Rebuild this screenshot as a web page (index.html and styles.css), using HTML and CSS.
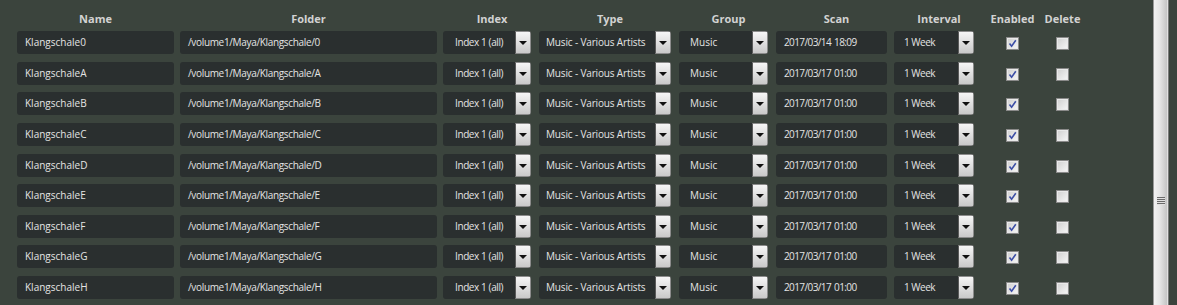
FILE: index.html
```html
<!DOCTYPE html>
<html lang="en">
<head>
    <meta charset="UTF-8">
    <title>Share Folders</title>
    <link rel="stylesheet" href="styles.css">
</head>
<body>
    <div class="page">
        <main class="shares">
            <div class="head">
                <div class="h c-name">Name</div>
                <div class="h c-folder">Folder</div>
                <div class="h c-index shift">Index</div>
                <div class="h c-type shift">Type</div>
                <div class="h c-group shift">Group</div>
                <div class="h c-scan shift">Scan</div>
                <div class="h c-interval shift">Interval</div>
                <div class="h c-enabled">Enabled</div>
                <div class="h c-delete">Delete</div>
            </div>
            <div id="rows" class="rows"></div>
        </main>
        <aside class="scrollbar"><span class="grip"></span></aside>
    </div>

    <template id="rowTpl">
        <div class="row">
            <div class="field c-name" data-k="name"></div>
            <div class="field c-folder" data-k="folder"></div>
            <div class="select c-index"><span class="val pad-index">Index 1 (all)</span><span class="drop"></span></div>
            <div class="select c-type"><span class="val pad-type">Music - Various Artists</span><span class="drop"></span></div>
            <div class="select c-group"><span class="val pad-group">Music</span><span class="drop"></span></div>
            <div class="field c-scan" data-k="scan"></div>
            <div class="select c-interval"><span class="val pad-interval">1 Week</span><span class="drop"></span></div>
            <div class="check-cell c-enabled"><span class="check on"><svg viewBox="0 0 9 9" width="9" height="9"><path d="M1.5 4.5 L3.6 7.2 L7.8 1.2" fill="none" stroke="#3c4ea6" stroke-width="1.6"/></svg></span></div>
            <div class="check-cell c-delete"><span class="check"></span></div>
        </div>
    </template>

    <script>
        const names = ['0', 'A', 'B', 'C', 'D', 'E', 'F', 'G', 'H'];
        const rows = document.getElementById('rows');
        const tpl = document.getElementById('rowTpl');

        names.forEach((n, i) => {
            const row = tpl.content.firstElementChild.cloneNode(true);
            row.querySelector('[data-k="name"]').textContent = 'Klangschale' + n;
            row.querySelector('[data-k="folder"]').textContent = '/volume1/Maya/Klangschale/' + n;
            row.querySelector('[data-k="scan"]').textContent = i === 0 ? '2017/03/14 18:09' : '2017/03/17 01:00';
            rows.appendChild(row);
        });
    </script>
</body>
</html>
```

FILE: styles.css
```css
* {
    margin: 0;
    padding: 0;
    box-sizing: border-box;
}

html, body {
    height: 100%;
    overflow: hidden;
}

body {
    background-color: #3b443d;
    color: #e4e4e4;
    font-family: 'Open Sans', 'DejaVu Sans', sans-serif;
    font-size: 10px;
}

.page {
    display: flex;
    height: 100%;
}

.shares {
    flex: 1;
    padding-left: 17px;
}

/* header */

.head {
    display: flex;
    height: 31px;
    padding-top: 7px;
}

.h {
    font-size: 11px;
    font-weight: 700;
    color: #d2d2d2;
    text-align: center;
    line-height: 24px;
    height: 24px;
}

.h.shift {
    padding-left: 10px;
}

/* columns */

.c-name { width: 157px; }
.c-folder { width: 257px; margin-left: 6px; letter-spacing: -0.33px; }
.c-index { width: 88px; margin-left: 6px; letter-spacing: -0.4px; }
.c-type { width: 132px; margin-left: 8px; letter-spacing: -0.15px; }
.c-group { width: 89px; margin-left: 8px; }
.c-scan { width: 111px; margin-left: 8px; letter-spacing: -0.6px; word-spacing: 1px; }
.c-interval { width: 80px; margin-left: 7px; letter-spacing: -0.5px; }
.c-enabled { width: 45px; margin-left: 16px; }
.c-delete { width: 45px; margin-left: 5px; }

.h { letter-spacing: 0; word-spacing: 0; }

/* rows */

.rows {
    display: flex;
    flex-direction: column;
    gap: 7.625px;
}

.row {
    display: flex;
    height: 23px;
}

.field,
.select {
    background-color: #2a2f2f;
    border-radius: 3px;
    height: 23px;
    line-height: 23px;
    white-space: nowrap;
    overflow: hidden;
}

.field {
    padding-left: 8px;
}

.select {
    display: flex;
}

.val {
    flex: 1;
}

.pad-index { padding-left: 12px; }
.pad-type { padding-left: 7px; }
.pad-group { padding-left: 11px; }
.pad-interval { padding-left: 10px; }

.drop {
    width: 16px;
    height: 23px;
    border: 1px solid #8c8c8c;
    border-left-color: #5a5a5a;
    background: linear-gradient(#f6f6f6, #c9c9c9);
    position: relative;
}

.drop::after {
    content: '';
    position: absolute;
    left: 3px;
    top: 9px;
    border-left: 4px solid transparent;
    border-right: 4px solid transparent;
    border-top: 4px solid #111;
}

/* checkboxes */

.check-cell {
    display: flex;
    justify-content: center;
    align-items: center;
    padding-top: 2px;
}

.check {
    width: 13px;
    height: 13px;
    border: 1px solid #8a8a8a;
    background: linear-gradient(135deg, #cfcfcf, #f7f7f7);
    box-shadow: inset 0 0 0 1px #e9e9e9;
    display: flex;
    align-items: center;
    justify-content: center;
}

/* scrollbar */

.scrollbar {
    width: 16px;
    margin-right: 8px;
    border-left: 1px solid #9a9a9a;
    border-right: 1px solid #7a7a7a;
    background: linear-gradient(90deg, #f2f2f2, #e6e6e6 40%, #c6c6c6 90%, #f0f0f0);
    display: flex;
    align-items: center;
    justify-content: center;
    padding-top: 96px;
}

.grip {
    width: 8px;
    height: 8px;
    background: repeating-linear-gradient(#6a6a6a 0 1px, #e0e0e0 1px 2px);
}
```
